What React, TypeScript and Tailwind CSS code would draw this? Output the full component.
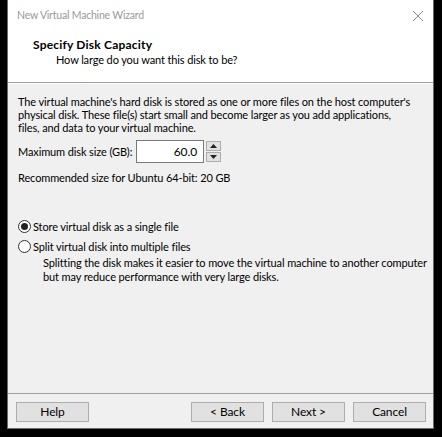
import React from "react";

const font = { fontFamily: 'Lato, "Noto Sans", Arial, sans-serif' };

function Button({ label }: { label: string }) {
  return (
    <button className="w-[73px] h-[20px] border border-[#adadad] bg-[#e1e1e1] text-[12px] leading-none text-black flex items-center justify-center">
      {label}
    </button>
  );
}

function Radio({ checked, label }: { checked?: boolean; label: string }) {
  return (
    <div className="flex items-center gap-[2px] h-[14px]">
      <span className="w-[13px] h-[13px] rounded-full border border-[#333] bg-white flex items-center justify-center">
        {checked && <span className="w-[7px] h-[7px] rounded-full bg-[#222]" />}
      </span>
      <span>{label}</span>
    </div>
  );
}

export default function App() {
  return (
    <div className="w-[442px] h-[437px] bg-black overflow-hidden" style={font}>
      <div className="ml-[7px] w-[427px] h-[429px] bg-[#f0f0f0] border-l border-r border-b border-[#6b6b6b] flex flex-col text-[11px] tracking-[-0.12px] text-black whitespace-nowrap">
        {/* Title bar */}
        <div className="h-[31px] bg-white flex items-center justify-between pl-[9px] pr-[8px]">
          <span className="text-[#999999] text-[10.5px] tracking-[-0.2px]">New Virtual Machine Wizard</span>
          <svg width="12" height="12" viewBox="0 0 12 12" className="mr-[1px]">
            <path d="M1 1 L11 11 M11 1 L1 11" stroke="#8a8a8a" strokeWidth="1" />
          </svg>
        </div>

        {/* Header */}
        <div className="h-[51px] bg-white pl-[25px] pt-[6px] leading-[15px]">
          <div className="font-bold text-[12px] tracking-[0.2px]">Specify Disk Capacity</div>
          <div className="pl-[23px]">How large do you want this disk to be?</div>
        </div>
        <div className="h-px bg-[#a0a0a0]" />
        <div className="h-px bg-white" />

        {/* Body */}
        <div className="flex-1 px-[10px] pt-[11px] leading-[13px]">
          <p>
            The virtual machine's hard disk is stored as one or more files on the host computer's
            <br />
            physical disk. These file(s) start small and become larger as you add applications,
            <br />
            files, and data to your virtual machine.
          </p>

          <div className="flex items-center mt-[6px]">
            <span className="w-[118px]">Maximum disk size (GB):</span>
            <div className="w-[68px] h-[23px] border border-[#7a7a7a] bg-white flex items-center justify-end pr-[6px] text-[12px]">
              60.0
            </div>
            <div className="ml-[2px] flex flex-col gap-px">
              <div className="w-[15px] h-[10px] border border-[#adadad] bg-[#e1e1e1] flex items-center justify-center">
                <svg width="7" height="4" viewBox="0 0 7 4"><path d="M3.5 0 L7 4 L0 4 Z" fill="#222" /></svg>
              </div>
              <div className="w-[15px] h-[10px] border border-[#adadad] bg-[#e1e1e1] flex items-center justify-center">
                <svg width="7" height="4" viewBox="0 0 7 4"><path d="M0 0 L7 0 L3.5 4 Z" fill="#222" /></svg>
              </div>
            </div>
          </div>

          <p className="mt-[8px]">Recommended size for Ubuntu 64-bit: 20 GB</p>

          <div className="mt-[35px] flex flex-col gap-[6px]">
            <Radio checked label="Store virtual disk as a single file" />
            <Radio label="Split virtual disk into multiple files" />
          </div>
          <p className="pl-[25px] mt-[3px] leading-[14px]">
            Splitting the disk makes it easier to move the virtual machine to another computer
            <br />
            but may reduce performance with very large disks.
          </p>
        </div>

        {/* Footer */}
        <div className="h-px bg-[#a0a0a0]" />
        <div className="h-[34px] flex items-start pt-[8px] px-[8px]">
          <Button label="Help" />
          <div className="flex-1" />
          <div className="flex gap-[8px] mr-[-1px]">
            <Button label="< Back" />
            <Button label="Next >" />
            <Button label="Cancel" />
          </div>
        </div>
      </div>
    </div>
  );
}
